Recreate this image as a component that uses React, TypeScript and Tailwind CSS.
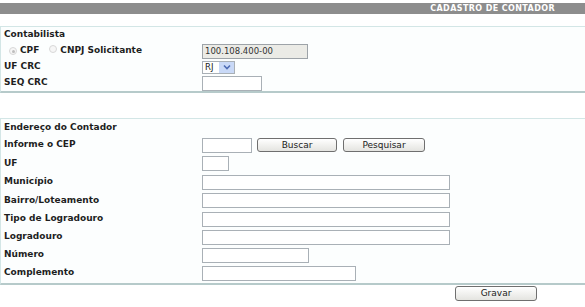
const font = { fontFamily: '"DejaVu Sans", Verdana, sans-serif' };

const labelClass = 'w-[201px] shrink-0 pl-[3px] text-[9px] font-bold text-[#1e1e1e]';
const inputClass = 'h-[15px] border border-[#a9b0b6] bg-white';
const buttonClass =
  'h-[14px] rounded-[3px] border border-[#6f6f6f] bg-gradient-to-b from-white to-[#e4e4e0] text-[9px] leading-none text-[#222] flex items-center justify-center';

function Row({ label, h = 'h-[18px]', children }: { label: string; h?: string; children?: React.ReactNode }) {
  return (
    <div className={`flex items-center ${h}`}>
      <div className={labelClass}>{label}</div>
      {children}
    </div>
  );
}

function Radio({ checked }: { checked?: boolean }) {
  return (
    <span className="inline-flex h-[8px] w-[8px] items-center justify-center rounded-full border border-[#d8d8d8] bg-[#f6f6f6]">
      {checked && <span className="h-[3px] w-[3px] rounded-full bg-[#bdbdbd]" />}
    </span>
  );
}

export default function App() {
  return (
    <div className="min-h-[307px] w-[585px] bg-white pt-[3px]" style={font}>
      <div className="flex h-[11px] items-center justify-end bg-[#8d8d8d] pr-[30px]">
        <span className="text-[8px] font-bold tracking-[0.4px] text-white">CADASTRO DE CONTADOR</span>
      </div>

      <div className="mt-[12px] border-t border-l border-b-2 border-t-[#d3e6e6] border-l-[#d3e6e6] border-b-[#b6caca] bg-[#fcfefe]">
        <Row label="Contabilista" h="h-[16px]" />
        <div className="flex h-[16px] items-center">
          <div className="flex w-[201px] shrink-0 items-center pl-[8px] text-[9px] font-bold text-[#1e1e1e]">
            <Radio checked />
            <span className="ml-[3px]">CPF</span>
            <span className="ml-[10px]">
              <Radio />
            </span>
            <span className="ml-[3px]">CNPJ Solicitante</span>
          </div>
          <div className="flex h-[15px] w-[106px] items-center border border-[#9da3a8] bg-[#ebebe6] pl-[2px] text-[8.5px] text-[#333]">
            100.108.400-00
          </div>
        </div>
        <Row label="UF CRC" h="h-[16px]">
          <div className="flex h-[13px] w-[33px] items-center border border-[#a9b0b6] bg-white">
            <span className="flex-1 pl-[2px] text-[8.5px] text-[#222]">RJ</span>
            <span className="flex h-[11px] w-[15px] items-center justify-center bg-[#c9d9f7]">
              <svg width="8" height="6" viewBox="0 0 8 6">
                <path d="M1 1.5 L4 4.5 L7 1.5" fill="none" stroke="#4d6bb3" strokeWidth="1.6" />
              </svg>
            </span>
          </div>
        </Row>
        <Row label="SEQ CRC" h="h-[16px]">
          <div className={`${inputClass} w-[60px]`} />
        </Row>
      </div>

      <div className="mt-[25px] border-t border-l border-b-2 border-t-[#d3e6e6] border-l-[#d3e6e6] border-b-[#b6caca] bg-[#fcfefe] pb-[1px]">
        <Row label="Endereço do Contador" h="h-[17px]" />
        <Row label="Informe o CEP" h="h-[18px]">
          <div className={`${inputClass} w-[50px]`} />
          <button className={`${buttonClass} ml-[5px] w-[80px]`}>Buscar</button>
          <button className={`${buttonClass} ml-[6px] w-[82px]`}>Pesquisar</button>
        </Row>
        <Row label="UF" h="h-[19px]">
          <div className={`${inputClass} w-[27px]`} />
        </Row>
        <Row label="Município">
          <div className={`${inputClass} w-[248px]`} />
        </Row>
        <Row label="Bairro/Loteamento" h="h-[19px]">
          <div className={`${inputClass} w-[248px]`} />
        </Row>
        <Row label="Tipo de Logradouro">
          <div className={`${inputClass} w-[248px]`} />
        </Row>
        <Row label="Logradouro">
          <div className={`${inputClass} w-[248px]`} />
        </Row>
        <Row label="Número">
          <div className={`${inputClass} w-[107px]`} />
        </Row>
        <Row label="Complemento">
          <div className={`${inputClass} w-[154px]`} />
        </Row>
      </div>

      <div className="mt-[1px] flex justify-end pr-[48px]">
        <button className={`${buttonClass} h-[15px] w-[82px]`}>Gravar</button>
      </div>
    </div>
  );
}
